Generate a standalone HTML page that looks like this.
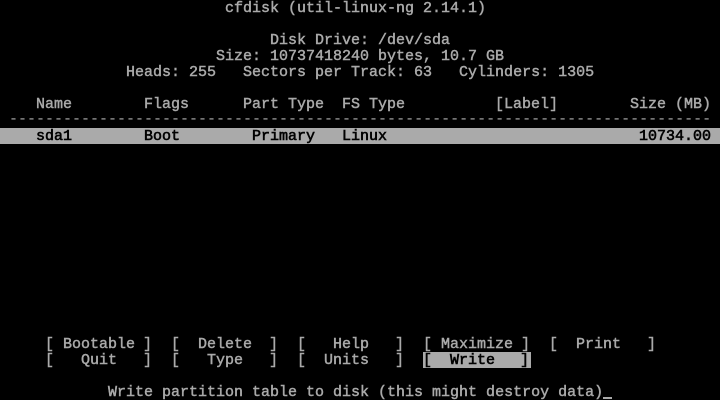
<!DOCTYPE html>
<html>
<head>
<meta charset="utf-8">
<style>
html,body{margin:0;padding:0;background:#000;}
#s{position:relative;width:720px;height:400px;background:#000;overflow:hidden;color:#aaa;font:15px/16px "Liberation Mono",monospace;-webkit-text-stroke:.45px currentColor;}
#s span{position:absolute;white-space:pre;height:16px;margin-top:1px;}
.b{position:absolute;background:#aaa;}
#s .k{color:#000;-webkit-text-stroke:.6px #000;}
</style>
</head>
<body>
<div id="s">
<div class="b" style="left:0;top:128px;width:720px;height:16px"></div>
<div class="b" style="left:423px;top:352px;width:108px;height:16px"></div>
<div class="b" style="left:603px;top:397px;width:9px;height:2px"></div>

<span style="left:225px;top:0">cfdisk (util-linux-ng 2.14.1)</span>
<span style="left:270px;top:32px">Disk Drive: /dev/sda</span>
<span style="left:216px;top:48px">Size: 10737418240 bytes, 10.7 GB</span>
<span style="left:126px;top:64px">Heads: 255   Sectors per Track: 63   Cylinders: 1305</span>

<span style="left:36px;top:96px">Name</span>
<span style="left:144px;top:96px">Flags</span>
<span style="left:243px;top:96px">Part Type</span>
<span style="left:342px;top:96px">FS Type</span>
<span style="left:495px;top:96px">[Label]</span>
<span style="left:630px;top:96px">Size (MB)</span>
<span style="left:9px;top:111px;-webkit-text-stroke:0">------------------------------------------------------------------------------</span>

<span class="k" style="left:36px;top:128px">sda1</span>
<span class="k" style="left:144px;top:128px">Boot</span>
<span class="k" style="left:252px;top:128px">Primary</span>
<span class="k" style="left:342px;top:128px">Linux</span>
<span class="k" style="left:639px;top:128px">10734.00</span>

<span style="left:45px;top:336px">[</span><span style="left:63px;top:336px">Bootable</span><span style="left:143px;top:336px">]</span>
<span style="left:171px;top:336px">[</span><span style="left:198px;top:336px">Delete</span><span style="left:269px;top:336px">]</span>
<span style="left:297px;top:336px">[</span><span style="left:333px;top:336px">Help</span><span style="left:395px;top:336px">]</span>
<span style="left:423px;top:336px">[</span><span style="left:441px;top:336px">Maximize</span><span style="left:521px;top:336px">]</span>
<span style="left:549px;top:336px">[</span><span style="left:576px;top:336px">Print</span><span style="left:647px;top:336px">]</span>

<span style="left:45px;top:352px">[</span><span style="left:81px;top:352px">Quit</span><span style="left:143px;top:352px">]</span>
<span style="left:171px;top:352px">[</span><span style="left:207px;top:352px">Type</span><span style="left:269px;top:352px">]</span>
<span style="left:297px;top:352px">[</span><span style="left:324px;top:352px">Units</span><span style="left:395px;top:352px">]</span>
<span class="k" style="left:423px;top:352px">[</span><span class="k" style="left:450px;top:352px">Write</span><span class="k" style="left:520px;top:352px">]</span>

<span style="left:108px;top:384px">Write partition table to disk (this might destroy data)</span>
</div>
</body>
</html>
